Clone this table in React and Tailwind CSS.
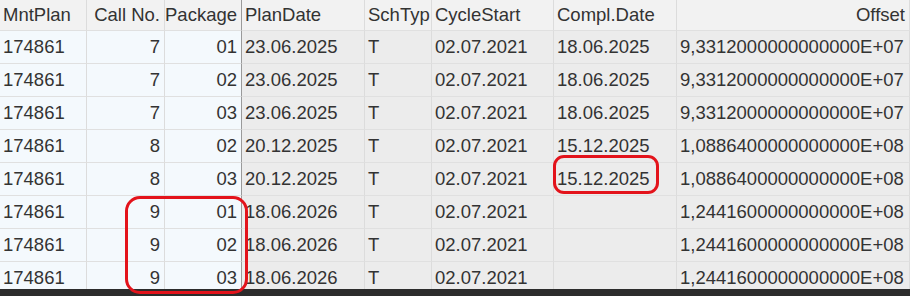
import React from "react";

const rows = [
  ["174861", "7", "01", "23.06.2025", "T", "02.07.2021", "18.06.2025", "9,3312000000000000E+07"],
  ["174861", "7", "02", "23.06.2025", "T", "02.07.2021", "18.06.2025", "9,3312000000000000E+07"],
  ["174861", "7", "03", "23.06.2025", "T", "02.07.2021", "18.06.2025", "9,3312000000000000E+07"],
  ["174861", "8", "02", "20.12.2025", "T", "02.07.2021", "15.12.2025", "1,0886400000000000E+08"],
  ["174861", "8", "03", "20.12.2025", "T", "02.07.2021", "15.12.2025", "1,0886400000000000E+08"],
  ["174861", "9", "01", "18.06.2026", "T", "02.07.2021", "", "1,2441600000000000E+08"],
  ["174861", "9", "02", "18.06.2026", "T", "02.07.2021", "", "1,2441600000000000E+08"],
  ["174861", "9", "03", "18.06.2026", "T", "02.07.2021", "", "1,2441600000000000E+08"],
];

const headers = ["MntPlan", "Call No.", "Package", "PlanDate", "SchTyp", "CycleStart", "Compl.Date", "Offset"];
const headAlign = ["text-left", "text-right", "text-right", "text-left", "text-left", "text-left", "text-left", "text-right"];
const bodyAlign = ["text-left", "text-right", "text-right", "text-left", "text-left", "text-left", "text-left", "text-left"];

function cellCls(i, body) {
  const bg = body ? (i < 3 ? "bg-[#f4f9fd]" : "bg-[#ececec]") : "bg-[#f2f2f2]";
  const br = i === 2 ? "border-r-[#9a9a9a]" : "border-r-[#dcdcdc]";
  const al = body ? bodyAlign[i] : headAlign[i];
  const pad = al === "text-right" ? "pr-[4px] pl-[2px]" : "pl-[3px] pr-[2px]";
  return `${bg} ${br} border-r border-b border-b-[#e0e0e0] ${al} ${pad} whitespace-nowrap overflow-hidden flex items-center ${al === "text-right" ? "justify-end" : "justify-start"}`;
}

export default function App() {
  return (
    <div className="w-[910px] h-[296px] overflow-hidden relative bg-[#ececec] text-[#333333] text-[18.5px] leading-none" style={{ fontFamily: '"Liberation Sans", Arial, sans-serif' }}>
      <div className="h-[289px] overflow-hidden">
        <div className="grid grid-cols-[87px_78px_77px_123px_67px_122px_123px_233px] grid-rows-[31px_repeat(8,33px)]">
          {headers.map((h, i) => (
            <div key={h} className={cellCls(i, false)}>{h}</div>
          ))}
          {rows.map((r, ri) =>
            r.map((c, i) => (
              <div key={ri + "-" + i} className={cellCls(i, true)}>{c}</div>
            ))
          )}
        </div>
      </div>
      <div className="h-[7px] bg-[#2c2c2c]" />
      <div className="absolute left-[553px] top-[155px] w-[106px] h-[39px] border-[3px] border-[#e3131b] rounded-[11px]" />
      <div className="absolute left-[125px] top-[196px] w-[123px] h-[98px] border-[3px] border-[#e3131b] rounded-[15px]" />
    </div>
  );
}
